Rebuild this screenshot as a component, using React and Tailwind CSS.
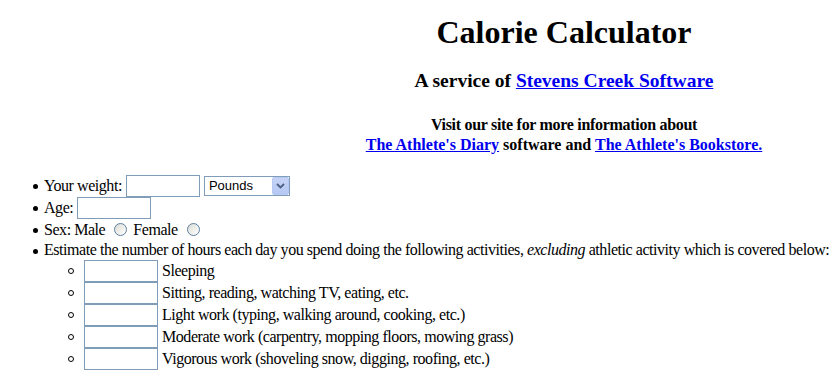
import React from "react";

function Box({ w = "w-[74px]" }) {
	return <span className={`${w} h-[22px] border border-[#7f9db9] bg-white shrink-0`}></span>;
}

function Radio() {
	return (
		<span className="block w-[13px] h-[13px] rounded-full border border-[#5d7f9e] bg-gradient-to-br from-[#dcdcd6] to-white shrink-0"></span>
	);
}

function Disc() {
	return <span className="absolute left-[-11px] top-[9px] w-[5px] h-[5px] rounded-full bg-black"></span>;
}

function Circle() {
	return (
		<span className="absolute left-[-16px] top-[8px] w-[6px] h-[6px] rounded-full border border-black"></span>
	);
}

function Select() {
	return (
		<span className="ml-[4px] w-[86px] h-[20px] border border-[#7f9db9] bg-white flex items-center justify-between font-['Liberation_Sans',sans-serif] text-[13px] tracking-normal text-black">
			<span className="pl-[4px]">Pounds</span>
			<span className="w-[17px] h-[18px] bg-gradient-to-b from-[#c6d3f7] to-[#b5c8f3] border border-[#b6c8f4] rounded-[2px] flex items-center justify-center">
				<svg width="9" height="6" viewBox="0 0 9 6">
					<path d="M1 1 L4.5 4.5 L8 1" fill="none" stroke="#4d6185" strokeWidth="1.8" />
				</svg>
			</span>
		</span>
	);
}

const activities = [
	"Sleeping",
	"Sitting, reading, watching TV, eating, etc.",
	"Light work (typing, walking around, cooking, etc.)",
	"Moderate work (carpentry, mopping floors, mowing grass)",
	"Vigorous work (shoveling snow, digging, roofing, etc.)",
];

export default function App() {
	return (
		<div className="min-h-[382px] bg-white text-black font-['Liberation_Serif',serif] text-[16px]">
			<div className="flex">
				<div className="w-[296px] shrink-0"></div>
				<div className="flex-1 text-center">
					<h1 className="pt-[14px] text-[32px] leading-[36px] font-bold">Calorie Calculator</h1>
					<h3 className="mt-[20px] text-[19.5px] leading-[22px] font-bold">
						A service of{" "}
						<a href="#" className="text-[#0000ee] underline">
							Stevens Creek Software
						</a>
					</h3>
					<p className="mt-[23px] font-bold leading-[20px]">
						<span className="tracking-[-0.3px]">Visit our site for more information about</span>
						<br />
						<a href="#" className="text-[#0000ee] underline">
							The Athlete's Diary
						</a>{" "}
						software and{" "}
						<a href="#" className="text-[#0000ee] underline">
							The Athlete's Bookstore.
						</a>
					</p>
				</div>
			</div>

			<ul className="mt-[20px] pl-[44px] tracking-[-0.45px]">
				<li className="relative h-[22px] flex items-center leading-[22px]">
					<Disc />
					<span className="mr-[4px]">Your weight:</span>
					<Box />
					<Select />
				</li>
				<li className="relative h-[22px] flex items-center leading-[22px]">
					<Disc />
					<span className="mr-[4px]">Age:</span>
					<Box />
				</li>
				<li className="relative h-[21px] flex items-center leading-[21px]">
					<Disc />
					<span>Sex: Male</span>
					<span className="ml-[9px] mr-[6px]">
						<Radio />
					</span>
					<span>Female</span>
					<span className="ml-[9px]">
						<Radio />
					</span>
				</li>
				<li className="relative h-[20px] flex items-center leading-[20px] whitespace-nowrap">
					<Disc />
					<span>
						Estimate the number of hours each day you spend doing the following activities, <i>excluding</i>{" "}
						athletic activity which is covered below:
					</span>
				</li>
				<li>
					<ul className="pl-[40px]">
						{activities.map((a) => (
							<li key={a} className="relative h-[22px] flex items-center leading-[22px]">
								<Circle />
								<Box />
								<span className="ml-[4px]">{a}</span>
							</li>
						))}
					</ul>
				</li>
			</ul>
		</div>
	);
}
